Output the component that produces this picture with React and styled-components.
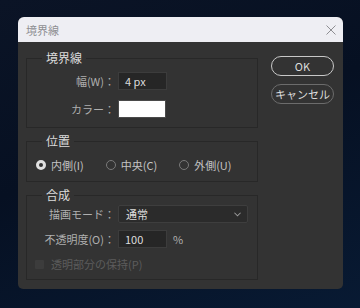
import React from 'react';
import styled, { createGlobalStyle } from 'styled-components';

const GlobalStyle = createGlobalStyle`
  html, body {
    margin: 0;
    padding: 0;
  }
  body {
    width: 360px;
    height: 308px;
    overflow: hidden;
    background: linear-gradient(160deg, #0b1426 0%, #061022 45%, #081a33 100%);
    font-family: "Noto Sans CJK JP", "Noto Sans", sans-serif;
  }
`;

function App() {
  return (
    <Page>
      <GlobalStyle />
      <Dialog>
        <TitleBar>
          <span>境界線</span>
          <CloseIcon viewBox="0 0 10 10">
            <path d="M0.5 0.5 L9.5 9.5 M9.5 0.5 L0.5 9.5" />
          </CloseIcon>
        </TitleBar>
        <Body>
          <Groups>
            <Group top={7}>
              <Legend>境界線</Legend>
              <Rows gap={10} bottom={9}>
                <Label>幅(W)：</Label>
                <Field width={49}>4 px</Field>
                <Label>カラー：</Label>
                <Swatch />
              </Rows>
            </Group>

            <Group top={4}>
              <Legend>位置</Legend>
              <Radios>
                <RadioItem>
                  <Radio checked />
                  内側(I)
                </RadioItem>
                <RadioItem>
                  <Radio />
                  中央(C)
                </RadioItem>
                <RadioItem>
                  <Radio />
                  外側(U)
                </RadioItem>
              </Radios>
            </Group>

            <Group top={3}>
              <Legend>合成</Legend>
              <Rows gap={7} bottom={8}>
                <Label>描画モード：</Label>
                <Select>
                  通常
                  <Chevron viewBox="0 0 8 5">
                    <path d="M0.5 0.5 L4 4 L7.5 0.5" />
                  </Chevron>
                </Select>
                <Label>不透明度(O)：</Label>
                <FieldRow>
                  <Field width={49}>100</Field>
                  <Unit>%</Unit>
                </FieldRow>
              </Rows>
              <CheckRow>
                <CheckBox />
                透明部分の保持(P)
              </CheckRow>
            </Group>
          </Groups>

          <Buttons>
            <Button primary>OK</Button>
            <Button>キャンセル</Button>
          </Buttons>
        </Body>
      </Dialog>
    </Page>
  );
}

export default App;

const Page = styled.div`
  padding: 17px 17px 0 18px;
`;

const Dialog = styled.div`
  width: 325px;
  height: 272px;
  background: #333333;
  border-radius: 6px 6px 5px 5px;
  overflow: hidden;
  display: flex;
  flex-direction: column;
`;

const TitleBar = styled.div`
  height: 25px;
  flex: none;
  background: #eeeef3;
  display: flex;
  align-items: center;
  justify-content: space-between;
  padding: 0 7px 0 8px;
  font-size: 11px;
  color: #8e8e92;
`;

const CloseIcon = styled.svg`
  width: 10px;
  height: 10px;
  fill: none;
  stroke: #8e8e92;
  stroke-width: 1;
`;

const Body = styled.div`
  display: flex;
  padding: 9px 9px 0 8px;
  gap: 13px;
`;

const Groups = styled.div`
  width: 232px;
  display: flex;
  flex-direction: column;
  gap: 6px;
`;

const Group = styled.fieldset`
  margin: 0;
  padding: ${(p) => p.top}px 0 0;
  border: 1px solid #282828;
  min-width: 0;
`;

const Legend = styled.legend`
  margin-left: 15px;
  padding: 0 4px;
  font-size: 12px;
  line-height: 14px;
  color: #dcdcdc;
`;

const Rows = styled.div`
  display: grid;
  grid-template-columns: 88px auto;
  column-gap: 3px;
  row-gap: ${(p) => p.gap}px;
  align-items: center;
  justify-items: start;
  padding-bottom: ${(p) => p.bottom}px;
`;

const Label = styled.span`
  justify-self: end;
  font-size: 11px;
  color: #afafaf;
  white-space: nowrap;
`;

const Field = styled.div`
  box-sizing: border-box;
  width: ${(p) => p.width}px;
  height: 18px;
  background: #262626;
  border: 1px solid #3c3c3c;
  padding: 0 6px;
  font-size: 11px;
  line-height: 16px;
  color: #dddddd;
`;

const Swatch = styled.div`
  box-sizing: border-box;
  width: 48px;
  height: 18px;
  background: #ffffff;
  border: 1px solid #4a4a4a;
`;

const FieldRow = styled.div`
  display: flex;
  align-items: center;
  gap: 6px;
`;

const Unit = styled.span`
  font-size: 11px;
  color: #afafaf;
`;

const Select = styled.div`
  box-sizing: border-box;
  width: 130px;
  height: 18px;
  background: #2b2b2b;
  border: 1px solid #3e3e3e;
  border-radius: 2px;
  display: flex;
  align-items: center;
  justify-content: space-between;
  padding: 0 6px 0 7px;
  font-size: 11px;
  color: #dddddd;
`;

const Chevron = styled.svg`
  width: 7px;
  height: 5px;
  fill: none;
  stroke: #9a9a9a;
  stroke-width: 1.2;
`;

const Radios = styled.div`
  display: flex;
  align-items: center;
  gap: 22px;
  padding: 5px 0 8px 9px;
`;

const RadioItem = styled.label`
  display: flex;
  align-items: center;
  gap: 5px;
  font-size: 11px;
  color: #c4c4c4;
`;

const Radio = styled.span`
  box-sizing: border-box;
  width: 10px;
  height: 10px;
  border-radius: 50%;
  border: ${(p) => (p.checked ? '3px solid #e0e0e0' : '1px solid #7a7a7a')};
  background: #333333;
`;

const CheckRow = styled.div`
  display: flex;
  align-items: center;
  gap: 7px;
  padding: 0 0 7px 8px;
  font-size: 11px;
  color: #5c5c5c;
`;

const CheckBox = styled.span`
  width: 9px;
  height: 9px;
  background: #3c3c3c;
  border-radius: 1px;
`;

const Buttons = styled.div`
  width: 63px;
  display: flex;
  flex-direction: column;
  gap: 8px;
  padding-top: 5px;
`;

const Button = styled.button`
  box-sizing: border-box;
  height: 20px;
  border-radius: 10px;
  background: transparent;
  border: 1px solid ${(p) => (p.primary ? '#c8c8c8' : '#6c6c6c')};
  color: #dddddd;
  font-family: "Noto Sans CJK JP", sans-serif;
  font-size: 11px;
  padding: 0;
`;
